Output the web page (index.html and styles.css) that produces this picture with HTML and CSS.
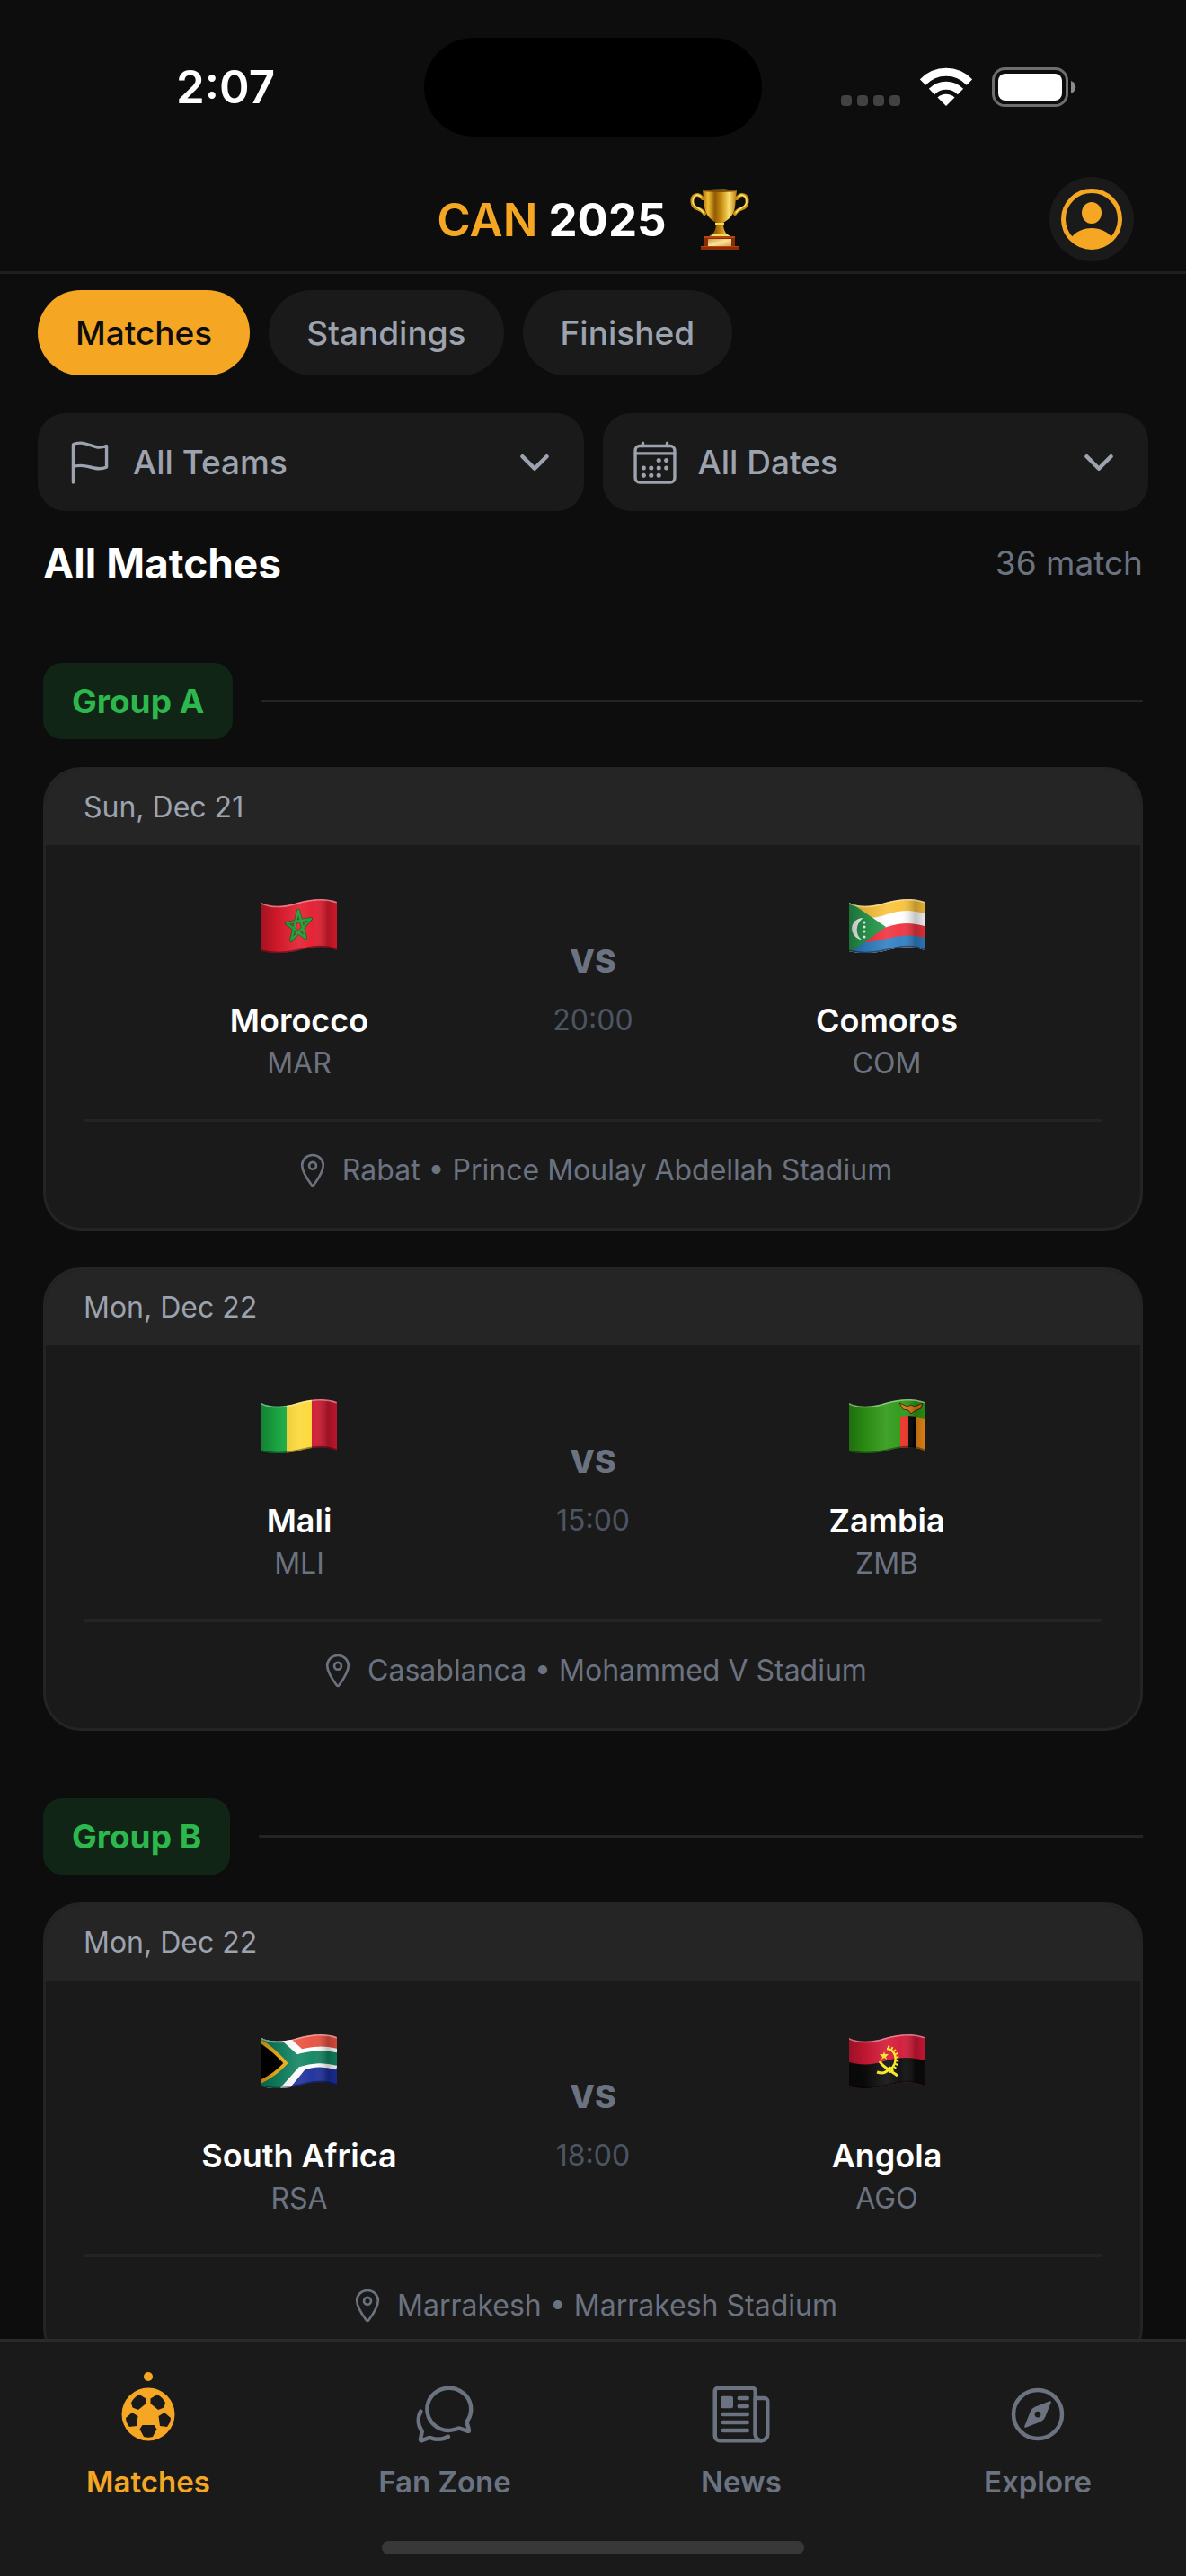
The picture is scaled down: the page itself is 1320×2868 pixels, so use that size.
FILE: index.html
```html
<!doctype html>
<html lang="en">
<head>
    <meta charset="UTF-8">
    <meta name="viewport" content="width=device-width, initial-scale=1.0">
    <title>CAN 2025</title>
    <link rel="stylesheet" href="styles.css">
</head>
<body>
<svg class="sprite" aria-hidden="true">
    <defs>
        <clipPath id="wave">
            <path d="M0 4C10 9 24 9 40 4C56 0 70-2 84 3V57C70 51 58 53 42 57C26 61 12 61 0 58Z"/>
        </clipPath>
        <linearGradient id="shade" x1="0" x2="1" y1="0" y2="0">
            <stop offset="0" stop-color="#000" stop-opacity=".28"/>
            <stop offset=".2" stop-color="#000" stop-opacity=".1"/>
            <stop offset=".5" stop-color="#fff" stop-opacity=".1"/>
            <stop offset=".68" stop-color="#fff" stop-opacity=".04"/>
            <stop offset=".88" stop-color="#000" stop-opacity=".24"/>
            <stop offset="1" stop-color="#000" stop-opacity=".1"/>
        </linearGradient>
        <linearGradient id="gold" x1="0" x2="1" y1="0" y2="0">
            <stop offset="0" stop-color="#a86b05"/>
            <stop offset=".16" stop-color="#f2bf32"/>
            <stop offset=".36" stop-color="#8f5b06"/>
            <stop offset=".55" stop-color="#c98d10"/>
            <stop offset=".78" stop-color="#fbe070"/>
            <stop offset="1" stop-color="#b87a08"/>
        </linearGradient>
        <linearGradient id="plate" x1="0" x2="1" y1="0" y2="1">
            <stop offset="0" stop-color="#c99a45"/>
            <stop offset=".5" stop-color="#fbe39a"/>
            <stop offset="1" stop-color="#d6a54a"/>
        </linearGradient>
    </defs>
    <symbol id="gloss" viewBox="0 0 84 60">
        <path fill="url(#shade)" d="M0 0h84v60H0z"/>
        <path fill="none" stroke="#fff" stroke-opacity=".4" stroke-width="3" d="M0 4C10 9 24 9 40 4C56 0 70-2 84 3"/>
        <path fill="none" stroke="#000" stroke-opacity=".4" stroke-width="3" d="M84 57C70 51 58 53 42 57C26 61 12 61 0 58"/>
    </symbol>
    <symbol id="pin" viewBox="0 0 512 512">
        <g fill="none" stroke="currentColor" stroke-width="32" stroke-linecap="round" stroke-linejoin="round">
            <path d="M256 48c-79.5 0-144 61.39-144 137 0 87 96 224.87 131.25 272.49a15.77 15.77 0 0025.5 0C304 409.89 400 272.07 400 185c0-75.61-64.5-137-144-137z"/>
            <circle cx="256" cy="192" r="48"/>
        </g>
    </symbol>
    <symbol id="chevron" viewBox="0 0 512 512">
        <path fill="none" stroke="currentColor" stroke-width="48" stroke-linecap="round" stroke-linejoin="round" d="M112 184l144 144 144-144"/>
    </symbol>
</svg>

<div class="app">
    <div class="status">
        <div class="time">2:07</div>
        <div class="island"></div>
        <div class="signals">
            <svg width="66" height="44" viewBox="0 0 66 44" fill="#424242">
                <rect y="31" width="12" height="12" rx="4"/>
                <rect x="18" y="31" width="12" height="12" rx="4"/>
                <rect x="36" y="31" width="12" height="12" rx="4"/>
                <rect x="54" y="31" width="12" height="12" rx="4"/>
            </svg>
            <svg width="58" height="44" viewBox="0 0 58 44">
                <g fill="none" stroke="#fff" stroke-width="9">
                    <path d="M3 16.500C17.500 1.500 40.500 1.500 55 16.500"/>
                    <path d="M13 27C22 18 36 18 45 27"/>
                </g>
                <path fill="#fff" d="M19.500 33.500C25 28.500 33 28.500 38.500 33.500L29 43Z"/>
            </svg>
            <svg width="94" height="44" viewBox="0 0 94 44">
                <rect x="1.500" y="1.500" width="82" height="41" rx="13" fill="none" stroke="#6e6e6e" stroke-width="3"/>
                <rect x="7" y="7" width="71" height="30" rx="8" fill="#fff"/>
                <path fill="#8a8a8a" d="M88 15c7 3 7 11 0 14z"/>
            </svg>
        </div>
    </div>

    <header class="header">
        <h1 class="title">
            <span><b>CAN</b> 2025</span>
            <svg width="66" height="68" viewBox="0 0 66 68">
                <g fill="none" stroke="#c8900f" stroke-width="4" stroke-linecap="round">
                    <path d="M14 11C9 4 2 7 2.500 15C3 24 13 21 16 28"/>
                    <path d="M52 11C57 4 64 7 63.500 15C63 24 53 21 50 28"/>
                </g>
                <g fill="none" stroke="#fbe27a" stroke-width="1.500" stroke-linecap="round">
                    <path d="M12 9C8 5 3 8 3 15C4 22 12 21 15 27"/>
                    <path d="M54 9C58 5 63 8 63 15C62 22 54 21 51 27"/>
                </g>
                <path fill="url(#gold)" d="M14 2C26 0 40 0 52 2L50 20C49 30 43 34 37 38C37 44 38 47 41 51C45 52 45 54 44 55H22C21 54 21 52 25 51C28 47 29 44 29 38C23 34 17 30 16 20Z"/>
                <ellipse cx="33" cy="2.500" rx="19" ry="1.500" fill="#7d4d03"/>
                <path fill="#f6d867" d="M28 38h10v2H28zM24 51h18v2H24z"/>
                <path fill="#8b2c05" d="M16 53H50V64H54V68H12V64H16Z"/>
                <path fill="#b3470e" d="M16 53h34v2H16zM12 64h42v1H12z"/>
                <path fill="url(#plate)" d="M20 56h26v8H20z"/>
            </svg>
        </h1>
        <button class="profile" aria-label="Profile">
            <svg width="70" height="70" viewBox="0 0 70 70">
                <clipPath id="face"><circle cx="35" cy="35" r="32"/></clipPath>
                <circle cx="35" cy="35" r="31.500" fill="none" stroke="#f5a623" stroke-width="5"/>
                <ellipse cx="35" cy="28" rx="11" ry="12" fill="#f5a623"/>
                <path clip-path="url(#face)" fill="#f5a623" d="M12 56C17 49 25 45 35 45C45 45 53 49 58 56V70H12Z"/>
            </svg>
        </button>
    </header>

    <nav class="tabs">
        <button class="tab active">Matches</button>
        <button class="tab">Standings</button>
        <button class="tab">Finished</button>
    </nav>

    <div class="filters">
        <div class="filter">
            <label for="teams" aria-label="Team">
                <svg class="filter-icon" viewBox="0 0 512 512">
                    <path fill="none" stroke="currentColor" stroke-width="32" stroke-linecap="round" stroke-miterlimit="10" d="M80 464V68.140a8 8 0 014-6.900C91.810 56.660 112.920 48 160 48c64 0 145 48 192 48a199.530 199.530 0 0077.230-15.770 2 2 0 012.770 1.850v219.360a4 4 0 01-2.390 3.650C421.370 308.700 392.330 320 352 320c-48 0-128-32-192-32s-80 16-80 16"/>
                </svg>
            </label>
            <select id="teams">
                <option>All Teams</option>
                <option>Morocco</option>
                <option>Mali</option>
                <option>Angola</option>
            </select>
            <svg class="chevron"><use href="#chevron"/></svg>
        </div>
        <div class="filter">
            <label for="dates" aria-label="Date">
                <svg class="filter-icon" viewBox="0 0 512 512">
                    <g fill="none" stroke="currentColor" stroke-width="32" stroke-linecap="round" stroke-linejoin="round">
                        <rect x="48" y="80" width="416" height="384" rx="48"/>
                        <path d="M128 48v32M384 48v32M464 160H48"/>
                    </g>
                    <g fill="currentColor">
                        <circle cx="296" cy="232" r="24"/>
                        <circle cx="376" cy="232" r="24"/>
                        <circle cx="136" cy="312" r="24"/>
                        <circle cx="216" cy="312" r="24"/>
                        <circle cx="296" cy="312" r="24"/>
                        <circle cx="376" cy="312" r="24"/>
                        <circle cx="136" cy="392" r="24"/>
                        <circle cx="216" cy="392" r="24"/>
                        <circle cx="296" cy="392" r="24"/>
                    </g>
                </svg>
            </label>
            <select id="dates">
                <option>All Dates</option>
                <option>Sun, Dec 21</option>
                <option>Mon, Dec 22</option>
            </select>
            <svg class="chevron"><use href="#chevron"/></svg>
        </div>
    </div>

    <main class="list">
        <div class="list-head">
            <h2>All Matches</h2>
            <span>36 match</span>
        </div>

        <section class="group">
            <div class="group-head"><h3>Group A</h3></div>
            <article class="card">
                <div class="date">Sun, Dec 21</div>
                <div class="match">
                    <div class="team">
                        <svg class="flag" viewBox="0 0 84 60">
                            <g clip-path="url(#wave)">
                                <path fill="#e31b2e" d="M0 0h84v60H0z"/>
                                <path fill="none" stroke="#184f1c" stroke-width="4" stroke-linejoin="round" d="M41 13L49 43L28 27L55 22L33 46Z"/>
                                <path fill="none" stroke="#179b2c" stroke-width="2.500" stroke-linejoin="round" d="M41 13L49 43L28 27L55 22L33 46Z"/>
                                <use href="#gloss" width="84" height="60"/>
                            </g>
                        </svg>
                        <strong>Morocco</strong>
                        <span>MAR</span>
                    </div>
                    <div class="versus"><b>VS</b><time>20:00</time></div>
                    <div class="team">
                        <svg class="flag" viewBox="0 0 84 60">
                            <g clip-path="url(#wave)">
                                <path fill="#f9c23a" d="M0 0h84v60H0z"/>
                                <path fill="#fff" d="M0 19C14 23 28 22 42 17C58 12 70 12 84 16V60H0Z"/>
                                <path fill="#ef3340" d="M0 33C14 37 28 35 42 31C58 26 70 26 84 30V60H0Z"/>
                                <path fill="#2f80c3" d="M0 47C14 49 28 48 42 44C58 40 70 39 84 43V60H0Z"/>
                                <path fill="#279a4e" d="M0 3L41 31L0 60Z"/>
                                <path fill="#fff" d="M16 21C0 21-2 42 15 46C6 40 7 27 16 21Z"/>
                                <g fill="#fff">
                                    <circle cx="17" cy="26" r="1.500"/>
                                    <circle cx="17" cy="31" r="1.500"/>
                                    <circle cx="17" cy="36" r="1.500"/>
                                    <circle cx="17" cy="42" r="1.500"/>
                                </g>
                                <use href="#gloss" width="84" height="60"/>
                            </g>
                        </svg>
                        <strong>Comoros</strong>
                        <span>COM</span>
                    </div>
                </div>
                <div class="venue"><svg><use href="#pin"/></svg>Rabat • Prince Moulay Abdellah Stadium</div>
            </article>
            <article class="card">
                <div class="date">Mon, Dec 22</div>
                <div class="match">
                    <div class="team">
                        <svg class="flag" viewBox="0 0 84 60">
                            <g clip-path="url(#wave)">
                                <path fill="#1db347" d="M0 0h28v60H0z"/>
                                <path fill="#fdd835" d="M28 0h28v60H28z"/>
                                <path fill="#cf1730" d="M56 0h28v60H56z"/>
                                <use href="#gloss" width="84" height="60"/>
                            </g>
                        </svg>
                        <strong>Mali</strong>
                        <span>MLI</span>
                    </div>
                    <div class="versus"><b>VS</b><time>15:00</time></div>
                    <div class="team">
                        <svg class="flag" viewBox="0 0 84 60">
                            <g clip-path="url(#wave)">
                                <path fill="#2d9815" d="M0 0h84v60H0z"/>
                                <path fill="#ee3024" d="M57 20L66 19V60H57Z"/>
                                <path fill="#000" d="M66 19L75 20V60H66Z"/>
                                <path fill="#ef8a16" d="M75 20L84 22V60H75Z"/>
                                <path fill="#e07a10" stroke="#3c2504" d="M56 4L65 8L69 6L73 8L82 4L80 10L73 13L69 16L66 12L60 11Z"/>
                                <use href="#gloss" width="84" height="60"/>
                            </g>
                        </svg>
                        <strong>Zambia</strong>
                        <span>ZMB</span>
                    </div>
                </div>
                <div class="venue"><svg><use href="#pin"/></svg>Casablanca • Mohammed V Stadium</div>
            </article>
        </section>

        <section class="group">
            <div class="group-head"><h3>Group B</h3></div>
            <article class="card">
                <div class="date">Mon, Dec 22</div>
                <div class="match">
                    <div class="team">
                        <svg class="flag" viewBox="0 0 84 60">
                            <g clip-path="url(#wave)">
                                <path fill="#e8503f" d="M0 0h84v30H0z"/>
                                <path fill="#1c2f9c" d="M0 30h84v30H0z"/>
                                <path fill="none" stroke="#fff" stroke-width="23" d="M6-4L42 29C58 24 70 24 86 28M10 68L42 29"/>
                                <path fill="none" stroke="#118562" stroke-width="14" d="M0-4L38 30C58 24 70 24 86 28M4 68L38 30"/>
                                <path fill="#118562" d="M0 0L34 30L6 60H0Z"/>
                                <path fill="#000" stroke="#fbb61a" stroke-width="4" d="M-4 6C10 14 18 22 27 32C18 42 10 48-4 54Z"/>
                                <use href="#gloss" width="84" height="60"/>
                            </g>
                        </svg>
                        <strong>South Africa</strong>
                        <span>RSA</span>
                    </div>
                    <div class="versus"><b>VS</b><time>18:00</time></div>
                    <div class="team">
                        <svg class="flag" viewBox="0 0 84 60">
                            <g clip-path="url(#wave)">
                                <path fill="#d31836" d="M0 0h84v60H0z"/>
                                <path fill="#0b0b0b" d="M0 31C14 35 28 34 42 29C58 25 70 25 84 29V60H0Z"/>
                                <path fill="none" stroke="#f8e71c" stroke-width="2.500" d="M42 16C56 17 54 40 41 40"/>
                                <path fill="none" stroke="#f8e71c" stroke-width="3" stroke-dasharray="2 2" d="M43 14C59 16 56 41 43 42"/>
                                <path fill="none" stroke="#f8e71c" stroke-width="3" d="M34 30C38 37 46 40 54 46M46 36C42 43 38 44 31 42"/>
                                <path fill="#f8e71c" d="M39 19L40 22L44 22L41 25L42 28L39 26L36 28L37 25L34 22L38 22Z"/>
                                <use href="#gloss" width="84" height="60"/>
                            </g>
                        </svg>
                        <strong>Angola</strong>
                        <span>AGO</span>
                    </div>
                </div>
                <div class="venue"><svg><use href="#pin"/></svg>Marrakesh • Marrakesh Stadium</div>
            </article>
        </section>
    </main>

    <footer class="bottom">
        <nav class="menu">
            <a href="#" class="active">
                <svg viewBox="0 0 72 72">
                    <circle cx="36" cy="36" r="29.500" fill="currentColor"/>
                    <g fill="#1a1a1a" transform="translate(6 6)">
                        <path d="M20 8L27.500 12.500V18L19 25L12.500 22.500L11 17C13 13 16 10 20 8Z"/>
                        <path d="M40 8L32.500 12.500V18L41 25L47.500 22.500L49 17C47 13 44 10 40 8Z"/>
                        <path d="M5 34L12 28L18.500 32L17 43L9 44C7 41 5 38 5 34Z"/>
                        <path d="M55 34L48 28L41.500 32L43 43L51 44C53 41 55 38 55 34Z"/>
                        <path d="M23.500 42H36.500L39.500 46.500L35 55C32 56 28 56 25 55L20.500 46.500Z"/>
                    </g>
                </svg>
                Matches
            </a>
            <a href="#">
                <svg viewBox="0 0 512 512">
                    <g fill="none" stroke="currentColor" stroke-width="32" stroke-linecap="round" stroke-miterlimit="10">
                        <path stroke-linejoin="round" d="M431 320.600c-1-3.600 1.200-8.600 3.300-12.200a33.680 33.680 0 012.100-3.100A162 162 0 00464 215c.3-92.200-77.500-167-173.700-167-83.900 0-153.900 57.100-170.300 132.900a160.700 160.700 0 00-3.700 34.200c0 92.300 74.800 169.100 171 169.100 15.300 0 35.900-4.600 47.200-7.700s22.500-7.200 25.400-8.300a26.440 26.440 0 019.300-1.700 26 26 0 0110.100 2L436 388.600a13.520 13.520 0 003.900 1 8 8 0 008-8 12.850 12.850 0 00-.5-2.700z"/>
                        <path d="M66.460 232a146.230 146.230 0 006.390 152.670c2.310 3.490 3.610 6.190 3.210 8s-11.930 61.870-11.930 61.870a8 8 0 002.710 7.680A8.170 8.170 0 0072 464a7.260 7.260 0 002.910-.6l56.210-22a15.700 15.700 0 0112 .2c18.940 7.380 39.880 12 60.830 12A159.210 159.210 0 00284 432.110"/>
                    </g>
                </svg>
                Fan Zone
            </a>
            <a href="#">
                <svg viewBox="0 0 512 512">
                    <g fill="none" stroke="currentColor" stroke-width="32" stroke-linecap="round" stroke-linejoin="round">
                        <path d="M368 415.860V72a24.070 24.070 0 00-24-24H72a24.070 24.070 0 00-24 24v352a40.120 40.120 0 0040 40h328"/>
                        <path d="M416 464a48 48 0 01-48-48V128h72a24 24 0 0124 24v264a48 48 0 01-48 48z"/>
                        <path d="M240 128h64M240 192h64M112 256h192M112 320h192M112 384h192"/>
                    </g>
                    <rect x="96" y="112" width="96" height="96" rx="16" fill="currentColor"/>
                </svg>
                News
            </a>
            <a href="#">
                <svg viewBox="0 0 512 512">
                    <circle cx="256" cy="256" r="192" fill="none" stroke="currentColor" stroke-width="32"/>
                    <path fill="currentColor" d="M350.670 150.930l-117.200 46.880a64 64 0 00-35.660 35.660l-46.880 117.200a8 8 0 0010.400 10.400l117.200-46.880a64 64 0 0035.660-35.660l46.880-117.200a8 8 0 00-10.400-10.400zM256 280a24 24 0 1124-24 24 24 0 01-24 24z"/>
                </svg>
                Explore
            </a>
        </nav>
        <div class="home"></div>
    </footer>
</div>
</body>
</html>
```
FILE: styles.css
```css
* {
    box-sizing: border-box;
}

body {
    margin: 0;
    background: #0d0d0d;
    color: #fff;
    font-family: Inter, "Liberation Sans", sans-serif;
}

h1, h2, h3 {
    margin: 0;
}

button, select {
    border: 0;
    font-family: inherit;
}

.sprite {
    position: absolute;
    width: 0;
    height: 0;
}

.app {
    display: flex;
    flex-direction: column;
    height: 100vh;
    overflow: hidden;
}

.app > * {
    flex-shrink: 0;
}

.status {
    display: grid;
    grid-template-columns: 1fr 376px 1fr;
    padding: 42px 0 34px;
}

.time {
    padding-left: 30px;
    font-size: 51px;
    font-weight: 600;
    line-height: 110px;
    text-align: center;
}

.island {
    height: 110px;
    border-radius: 55px;
    background: #000;
}

.signals {
    display: flex;
    align-items: center;
    justify-content: center;
    gap: 22px;
    padding-right: 34px;
}

.header {
    display: grid;
    grid-template-columns: 1fr auto 1fr;
    align-items: center;
    height: 119px;
    padding: 0 58px;
    border-bottom: 3px solid #1f1f1f;
}

.title {
    display: flex;
    grid-column: 2;
    align-items: center;
    gap: 26px;
    font-size: 51px;
    font-weight: 700;
}

.title b {
    color: #f5a623;
    font-weight: 600;
}

.profile {
    display: flex;
    align-items: center;
    justify-content: center;
    justify-self: end;
    width: 94px;
    height: 94px;
    padding: 0;
    border-radius: 50%;
    background: #1a1a1a;
}

.tabs {
    display: flex;
    gap: 21px;
    padding: 18px 42px 42px;
}

.tab {
    height: 95px;
    padding: 0 42px;
    border-radius: 48px;
    background: #1a1a1a;
    color: #9ca3af;
    font-size: 37px;
    font-weight: 500;
}

.tab.active {
    background: #f5a623;
    color: #0d0d0d;
}

.filters {
    display: grid;
    grid-template-columns: 1fr 1fr;
    gap: 21px;
    padding: 0 42px;
}

.filter {
    display: flex;
    align-items: center;
    gap: 21px;
    height: 109px;
    padding: 0 31px;
    border-radius: 31px;
    background: #1a1a1a;
    color: #9ca3af;
}

.filter label {
    display: flex;
}

.filter-icon {
    width: 54px;
    height: 54px;
}

.filter select {
    flex: 1;
    min-width: 0;
    padding: 0;
    appearance: none;
    background: none;
    color: inherit;
    font-size: 37px;
    font-weight: 500;
}

.chevron {
    width: 48px;
    height: 48px;
}

.list {
    flex: 1 1 0;
    min-height: 0;
    padding: 28px 48px 0;
    overflow: hidden;
}

.list-head {
    display: flex;
    align-items: center;
    justify-content: space-between;
    margin-bottom: 81px;
    line-height: 60px;
}

.list-head h2 {
    font-size: 46px;
    font-weight: 700;
}

.list-head span {
    color: #6b7280;
    font-size: 37px;
}

.group {
    margin-bottom: 75px;
}

.group-head {
    display: flex;
    align-items: center;
    gap: 32px;
    margin-bottom: 31px;
}

.group-head:after {
    content: "";
    flex: 1;
    height: 3px;
    background: #242424;
}

.group-head h3 {
    padding: 0 32px;
    border-radius: 21px;
    background: #112517;
    color: #2db84d;
    font-size: 37px;
    font-weight: 700;
    line-height: 85px;
}

.card {
    overflow: hidden;
    border: 3px solid #242424;
    border-radius: 42px;
    background: #1a1a1a;
}

.card + .card {
    margin-top: 41px;
}

.date {
    padding: 0 42px;
    background: #252525;
    color: #9ca3af;
    font-size: 32px;
    line-height: 84px;
}

.match {
    display: grid;
    grid-template-columns: 1fr 174px 1fr;
    align-items: center;
    margin: 0 42px;
    padding: 60px 0 38px;
    border-bottom: 3px solid #242424;
}

.team, .versus {
    display: flex;
    flex-direction: column;
    align-items: center;
}

.flag {
    width: 84px;
    height: 60px;
    margin-bottom: 51px;
}

.team strong {
    font-size: 36px;
    font-weight: 600;
    line-height: 48px;
}

.team span {
    color: #6b7280;
    font-size: 32px;
    line-height: 48px;
}

.versus {
    padding-bottom: 4px;
    line-height: 66px;
}

.versus b {
    color: #6b7280;
    font-size: 36px;
    font-weight: 800;
}

.versus time {
    color: #4b5563;
    font-size: 32px;
}

.venue {
    display: flex;
    align-items: center;
    justify-content: center;
    gap: 12px;
    padding: 33px 42px 43px;
    color: #6b7280;
    font-size: 32px;
    line-height: 42px;
}

.venue svg {
    width: 42px;
    height: 42px;
}

.bottom {
    padding: 45px 0 24px;
    border-top: 3px solid #2a2a2a;
    background: #1a1a1a;
}

.menu {
    display: grid;
    grid-template-columns: repeat(4, 1fr);
    margin-bottom: 44px;
}

.menu a {
    position: relative;
    display: flex;
    flex-direction: column;
    align-items: center;
    gap: 18px;
    color: #6b7280;
    font-size: 33px;
    font-weight: 600;
    line-height: 43px;
    text-decoration: none;
}

.menu svg {
    width: 72px;
    height: 72px;
}

.menu a.active {
    color: #f5a623;
}

/* active dot above the icon */
.menu a.active:before {
    content: "";
    position: absolute;
    top: -11px;
    width: 10px;
    height: 10px;
    border-radius: 50%;
    background: #f5a623;
}

.home {
    width: 470px;
    height: 15px;
    margin: 0 auto;
    border-radius: 8px;
    background: #383838;
}
```
